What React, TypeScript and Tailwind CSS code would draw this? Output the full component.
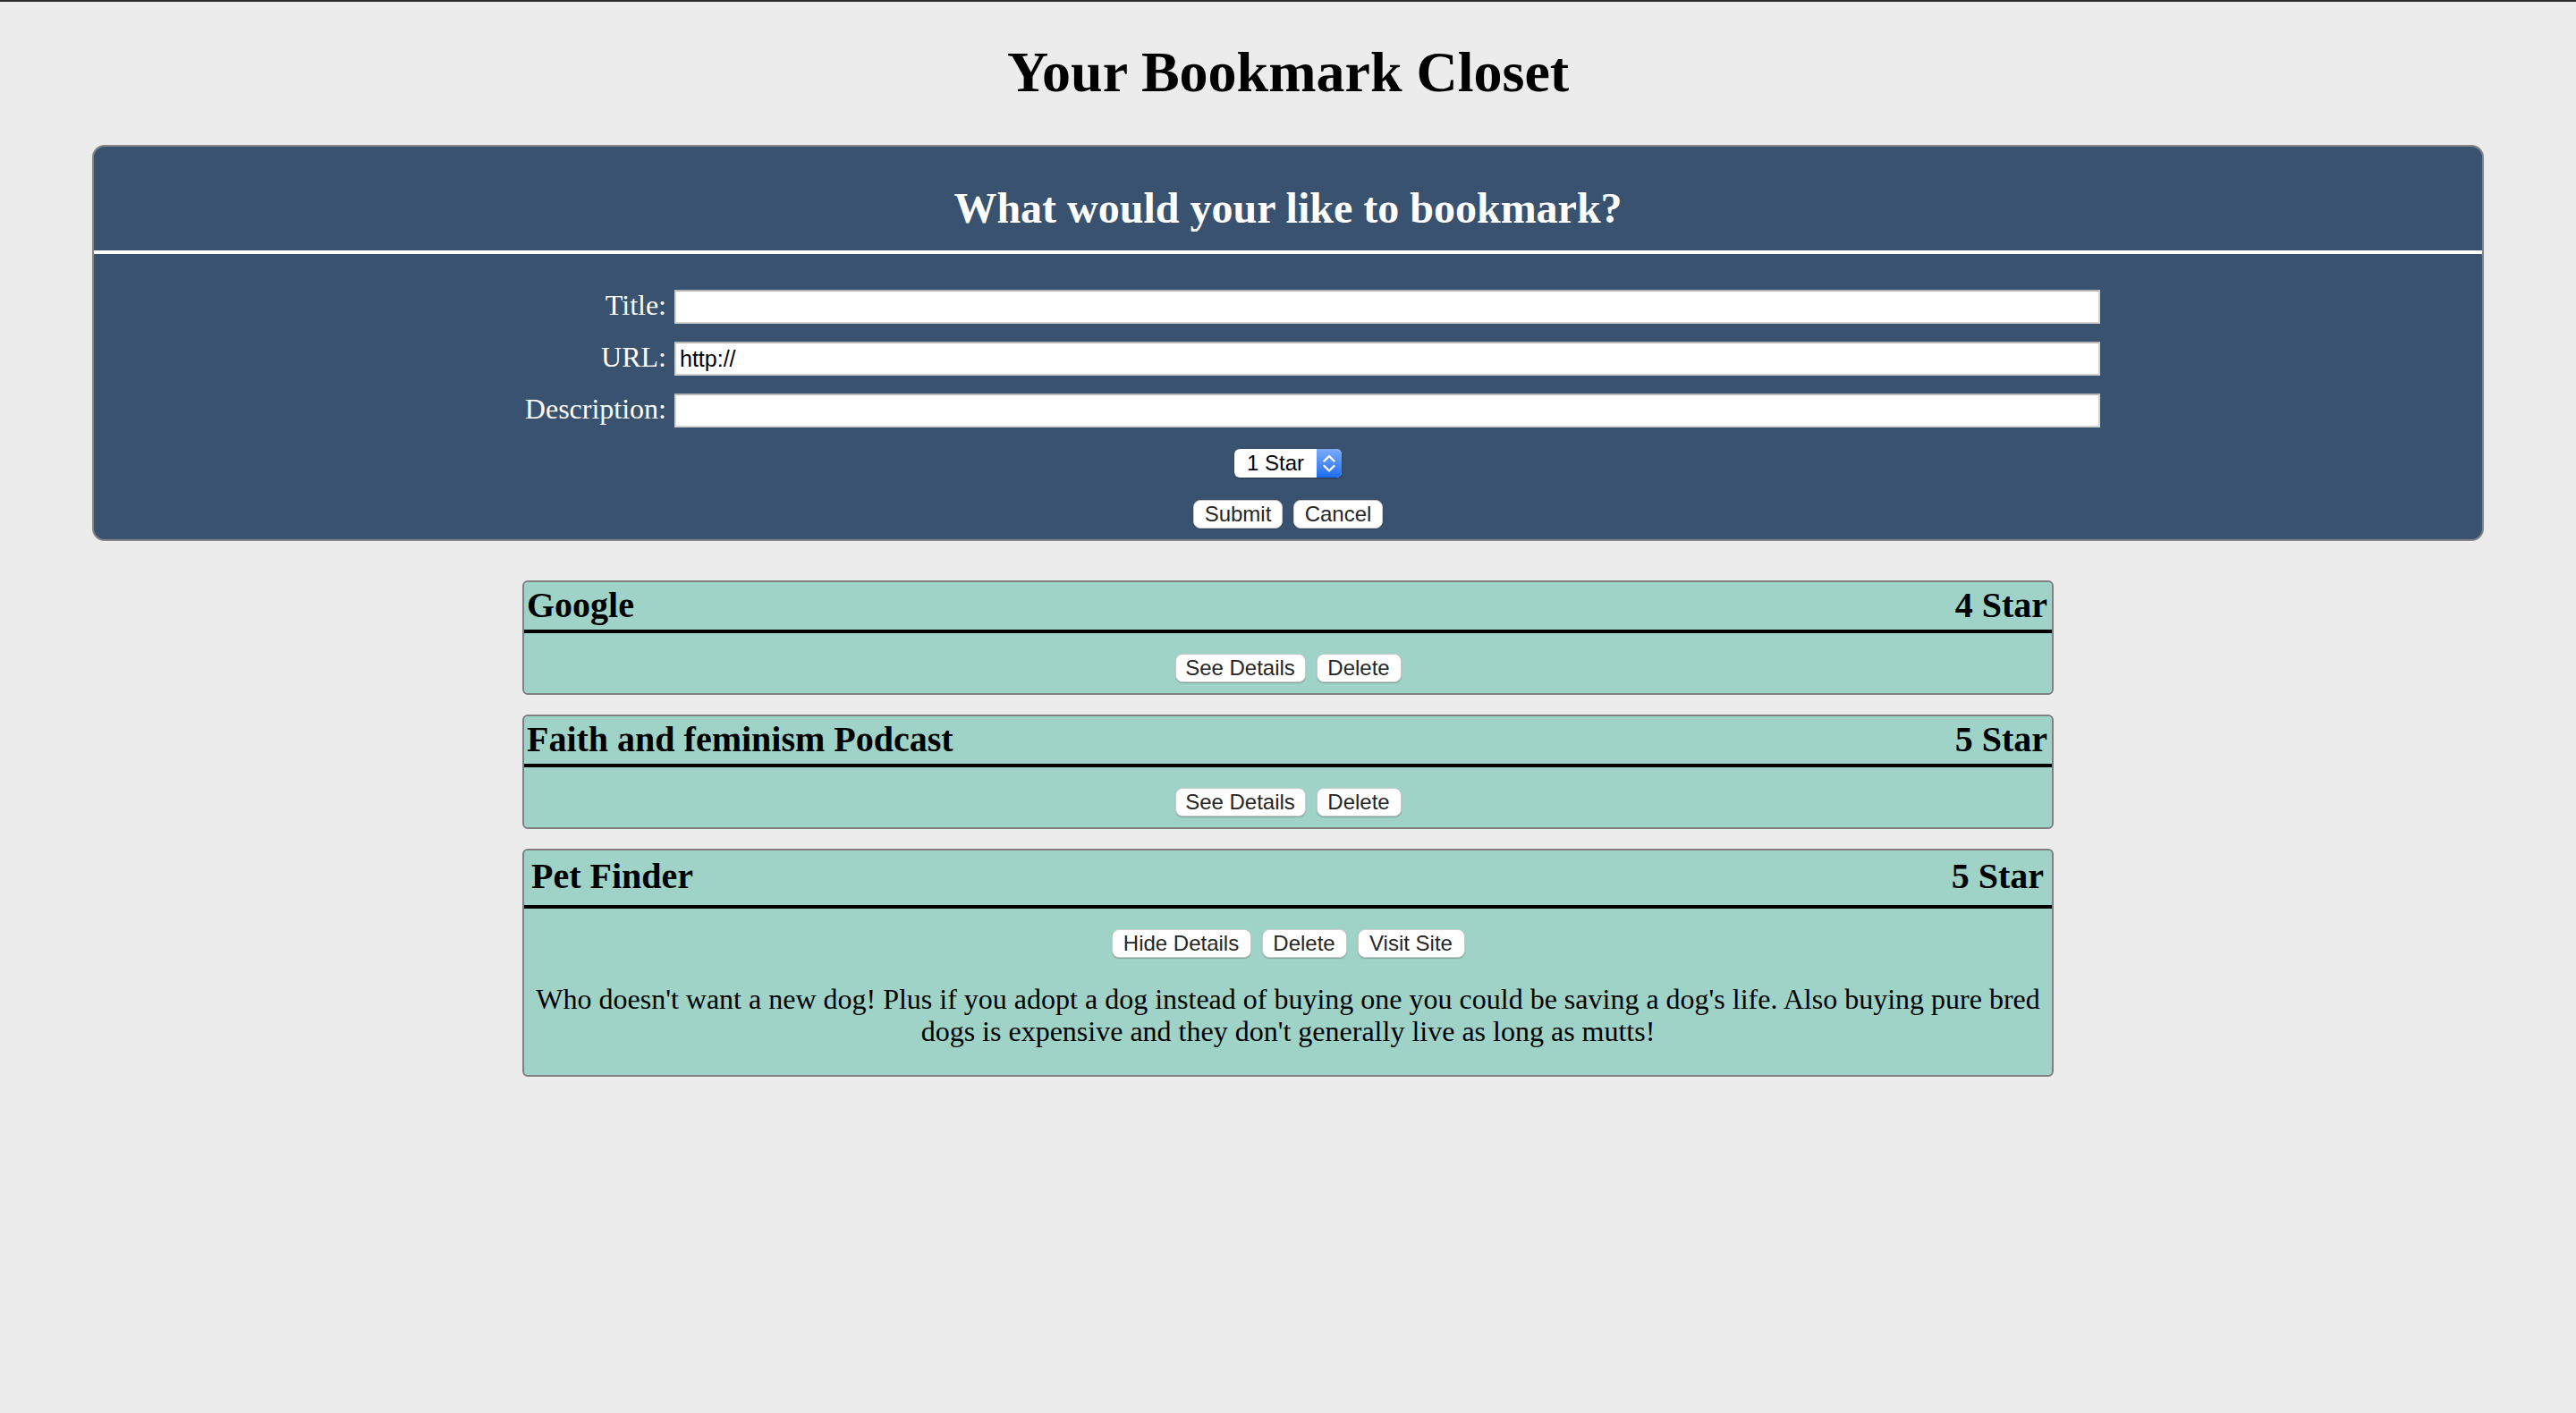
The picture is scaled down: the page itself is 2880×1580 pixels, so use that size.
import { useState } from "react";

type Bookmark = {
  id: number;
  title: string;
  url: string;
  rating: number;
  description: string;
};

const initialBookmarks: Bookmark[] = [
  { id: 1, title: "Google", url: "https://www.google.com", rating: 4, description: "A search engine." },
  { id: 2, title: "Faith and feminism Podcast", url: "http://", rating: 5, description: "A podcast." },
  {
    id: 3,
    title: "Pet Finder",
    url: "https://www.petfinder.com",
    rating: 5,
    description:
      "Who doesn't want a new dog! Plus if you adopt a dog instead of buying one you could be saving a dog's life. Also buying pure bred dogs is expensive and they don't generally live as long as mutts!",
  },
];

function Btn({ width, children, onClick }: { width: string; children: React.ReactNode; onClick?: () => void }) {
  return (
    <button
      onClick={onClick}
      className={`${width} h-[32px] rounded-[8px] border border-[#cacaca] bg-white text-center font-['Liberation_Sans',Arial,sans-serif] text-[24px] leading-none text-[#262626] shadow-[0_1px_1px_rgba(0,0,0,0.22)]`}
    >
      {children}
    </button>
  );
}

function Field({ label, value }: { label: string; value?: string }) {
  return (
    <div className="flex items-start">
      <label className="h-[38px] w-[640px] flex-none text-right text-[32px] leading-[34px] text-white">{label}</label>
      <input
        defaultValue={value}
        className="ml-[9px] h-[38px] w-[1594px] border-2 border-[#d2d2d2] border-t-[#b4b4b4] bg-white pl-[4px] font-['Liberation_Sans',Arial,sans-serif] text-[25px] text-black outline-none"
      />
    </div>
  );
}

function StarSelect() {
  return (
    <div className="flex h-[32px] w-[120px] overflow-hidden rounded-[6px] bg-white shadow-[0_1px_2px_rgba(0,0,0,0.35)]">
      <span className="flex-1 pl-[14px] font-['Liberation_Sans',Arial,sans-serif] text-[24px] leading-[32px] text-black">1 Star</span>
      <span className="flex w-[28px] items-center justify-center bg-linear-to-b from-[#7cabf8] to-[#1b6cf3]">
        <svg width="28" height="32" viewBox="0 0 28 32" fill="none" stroke="white" strokeWidth="2.4" strokeLinecap="round" strokeLinejoin="round">
          <path d="M8.5 13.5 L14 8 L19.5 13.5" />
          <path d="M8.5 19 L14 24.5 L19.5 19" />
        </svg>
      </span>
    </div>
  );
}

function BookmarkCard({ bookmark, onDelete }: { bookmark: Bookmark; onDelete: () => void }) {
  const [open, setOpen] = useState(bookmark.id === 3);

  return (
    <div className="w-[1712px] overflow-hidden rounded-[6px] border-2 border-[#808080] bg-[#9fd3c7]">
      <div
        className={`flex justify-between border-b-4 border-black text-[40px] font-bold leading-[46px] text-black ${
          open ? "pt-[6px] pb-[9px] pl-[8px] pr-[9px]" : "pt-[3px] pb-[4px] pl-[3px] pr-[5px]"
        }`}
      >
        <span>{bookmark.title}</span>
        <span>{bookmark.rating} Star</span>
      </div>
      <div className="flex justify-center gap-[12px] pt-[23px]">
        <Btn width={open ? "w-[156px]" : "w-[146px]"} onClick={() => setOpen(!open)}>
          {open ? "Hide Details" : "See Details"}
        </Btn>
        <Btn width="w-[95px]" onClick={onDelete}>
          Delete
        </Btn>
        {open && <Btn width="w-[120px]">Visit Site</Btn>}
      </div>
      {open ? (
        <p className="mt-[28px] mb-[31px] px-[8px] text-center text-[32px] leading-[36px] text-black">{bookmark.description}</p>
      ) : (
        <div className="h-[12px]" />
      )}
    </div>
  );
}

export default function App() {
  const [bookmarks, setBookmarks] = useState(initialBookmarks);

  return (
    <div className="min-h-screen bg-[#ececec] pb-[40px] font-['Liberation_Serif','Times_New_Roman',serif]">
      <div className="h-[2px] bg-[#2e2e2e]" />
      <h1 className="pt-[42px] text-center text-[64px] font-bold leading-[74px] text-black">Your Bookmark Closet</h1>

      <section className="mx-[103px] mt-[44px] rounded-[14px] border-2 border-[#858585] bg-[#39526f] pb-[12px]">
        <h2 className="border-b-4 border-white pt-[41px] pb-[20px] text-center text-[48px] font-bold leading-[55px] text-white">
          What would your like to bookmark?
        </h2>
        <form className="pt-[40px]" onSubmit={(e) => e.preventDefault()}>
          <div className="flex flex-col gap-[20px]">
            <Field label="Title:" />
            <Field label="URL:" value="http://" />
            <Field label="Description:" />
          </div>
          <div className="mt-[24px] flex justify-center">
            <StarSelect />
          </div>
          <div className="mt-[25px] flex justify-center gap-[12px]">
            <Btn width="w-[100px]">Submit</Btn>
            <Btn width="w-[100px]">Cancel</Btn>
          </div>
        </form>
      </section>

      <div className="mt-[44px] flex flex-col items-center gap-[22px]">
        {bookmarks.map((b) => (
          <BookmarkCard key={b.id} bookmark={b} onDelete={() => setBookmarks(bookmarks.filter((x) => x.id !== b.id))} />
        ))}
      </div>
    </div>
  );
}
